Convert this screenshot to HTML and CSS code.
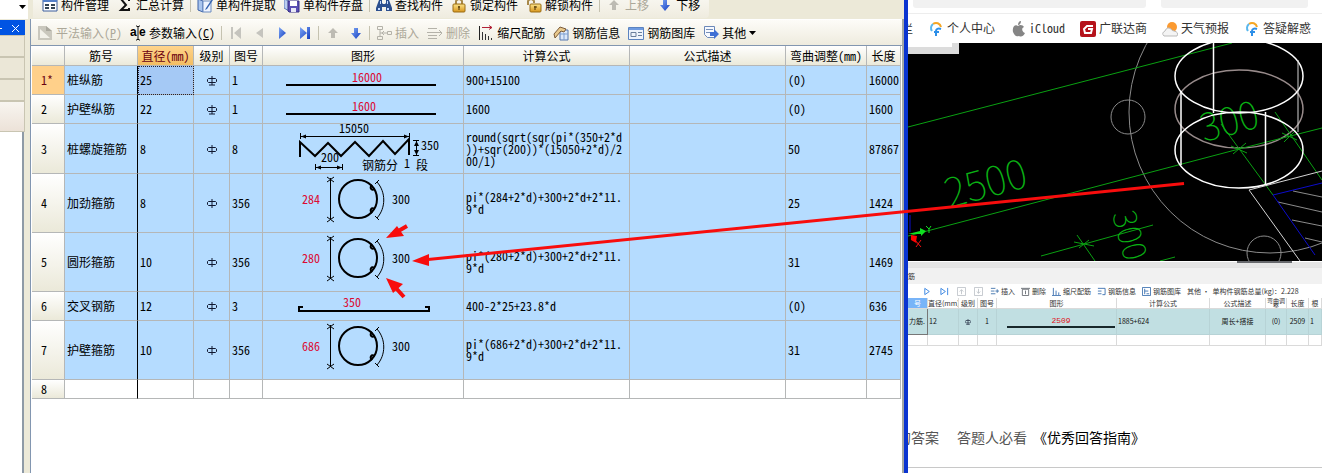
FILE: index.html
```html
<!DOCTYPE html>
<html lang="zh-CN">
<head>
<meta charset="utf-8">
<title>钢筋编辑</title>
<link rel="stylesheet" href="styles.css">
</head>
<body>
<svg class="defs" aria-hidden="true">
  <defs>
    <linearGradient id="blue" x1="0" y1="0" x2="1" y2="1"><stop offset="0" stop-color="#7fa8f5"/><stop offset="1" stop-color="#123cc0"/></linearGradient>
    <linearGradient id="gold" x1="0" y1="0" x2="0" y2="1"><stop offset="0" stop-color="#fbe48a"/><stop offset="1" stop-color="#d8951c"/></linearGradient>
  </defs>
  <symbol id="i-up" viewBox="0 0 16 16"><path d="M8 3l5 5h-3v5H6V8H3z" fill="#bdbbb3"/></symbol>
  <symbol id="i-down" viewBox="0 0 16 16"><path d="M6 3h4v5h3l-5 6-5-6h3z" fill="url(#blue)"/></symbol>
  <symbol id="i-ring" viewBox="0 0 200 58">
    <g fill="none" stroke="#000">
      <circle cx="95" cy="25" r="19" stroke-width="2"/>
      <path d="M67.500 4v42M64 3l7 5M71 3l-7 5M64 43l7 5M71 43l-7 5"/>
      <path d="M109 11c-3 3 0 6 2 4M109 39c-3-3 0-6 2-4" stroke-width="2"/>
      <path d="M114 8c9 10 9 26 0 36M112 10l4-4M112 42l4 4"/>
    </g>
  </symbol>
  <symbol id="i-phi" viewBox="0 0 10 10"><path d="M5 0v9M1.500 2.500h7l1 1v2l-1 1h-7l-1-1v-2z" fill="none" stroke="#101830"/></symbol>
  <symbol id="i-phi2" viewBox="0 0 10 10"><path d="M5 0v9M1.500 2.500h7l1 1v2l-1 1h-7l-1-1v-2zM2 9h6" fill="none" stroke="#101830"/></symbol>
  <symbol id="i-swirl" viewBox="0 0 16 18">
    <path d="M13 7A5 5 0 0 0 5 4" fill="none" stroke="#f6a623" stroke-width="2"/>
    <path d="M5 4a5 5 0 0 0-1 7" fill="none" stroke="#58b7ee" stroke-width="2"/>
    <path d="M13 9c-3-1-5 0-5 2v5M6 12h5" fill="none" stroke="#2d8fe8" stroke-width="2"/>
  </symbol>
</svg>

<div class="desktop">
  <section class="app">
    <div class="bar bar-top">
      <div class="combo"><svg width="7" height="4"><path d="M0 0h7L3.500 4z"/></svg></div>
      <div class="tools tools-top">
        <button><svg viewBox="0 0 16 16"><path d="M1 2h14v12H1z" fill="#fff" stroke="#3a5c9c"/><path d="M1 2h14v3H1z" fill="#5580c8"/><path d="M3 8h4M3 11h4M9 8h4M9 11h4" stroke="#345" stroke-width="2"/></svg>构件管理</button>
        <button><svg viewBox="0 0 16 16"><path d="M12 4V2H4l5 6-5 5h8v-2" fill="none" stroke="#111" stroke-width="2"/></svg>汇总计算</button>
        <i class="sep"></i>
        <button><svg viewBox="0 0 16 16"><path d="M1 2l5 2v11l-5-2z" fill="#a9c5ee" stroke="#3c62a8"/><path d="M6 4h8v11H6z" fill="#eef4ff" stroke="#6b8bc0"/><path d="M15 2l-6 9-1 2 2-1 6-9z" fill="#3563b0"/></svg>单构件提取</button>
        <button><svg viewBox="0 0 16 16"><path d="M0 2l5 2v10l-5-3z" fill="#b9cdf0" stroke="#5c78b5"/><path d="M4 4h11v11H5l-1-1z" fill="#5a4fb4" stroke="#372f86"/><path d="M6 4h7v5H6z" fill="#fff"/><path d="M7 11h5v4H7z" fill="#e8e8f6"/></svg>单构件存盘</button>
        <i class="sep"></i>
        <button><svg viewBox="0 0 16 16"><path d="M3 3h3v3l1 1h2l1-1V3h3l3 8v3h-6v-4H6v4H0v-3z" fill="#2c4f8e"/><path d="M2 11h2v2H2zM11 11h2v2h-2zM4 4h1v3H4zM11 4h1v3h-1z" fill="#c5daff"/></svg>查找构件</button>
        <button><svg viewBox="0 0 16 16"><path d="M5 8V4q3-4 6 0v4" fill="none" stroke="#a8894a" stroke-width="2"/><rect x="2" y="7" width="12" height="8" rx="1" fill="url(#gold)" stroke="#9a6c14"/><path d="M8 9v4M7 10h2" stroke="#4a3000"/></svg>锁定构件</button>
        <button><svg viewBox="0 0 16 16"><path d="M2 8V4q3-4 6 0v2" fill="none" stroke="#a8894a" stroke-width="2"/><rect x="4" y="7" width="11" height="8" rx="1" fill="url(#gold)" stroke="#9a6c14"/><path d="M9 9v4M8 10h3" stroke="#4a3000"/></svg>解锁构件</button>
        <i class="sep"></i>
        <button disabled><svg><use href="#i-up"/></svg>上移</button>
        <button><svg><use href="#i-down"/></svg>下移</button>
      </div>
    </div>

    <div class="work">
      <aside class="side">
        <div class="side-title"><svg width="25" height="15"><path d="M0 8h2v1H0z" fill="#fff"/><path d="M12 5l7 7M19 5l-7 7" stroke="#fff"/></svg></div>
        <div class="side-band"></div><div class="side-band"></div><div class="side-band"></div><div class="side-band last"></div>
        <div class="side-body"></div>
      </aside>
      <main class="panel">
        <div class="tools tools-edit">
          <button disabled><svg viewBox="0 0 16 16"><path d="M1 1h8l6 5v9H1z" fill="#c9c7bd"/><path d="M3 4l10 9H3z" fill="#f2f1ea"/><path d="M9 1v5h6" fill="#aaa89e"/></svg><span>平法输入(<u>P</u>)</span></button>
          <button><svg viewBox="0 0 16 16"><text x="0" y="11" class="ae">a</text><text x="9" y="11" class="ae">e</text><path d="M6 1h1l1 1 1-1h1M8 2v12M6 15h1l1-1 1 1h1" stroke="#111" fill="none"/></svg><span>参数输入(<u>C</u>)</span></button>
          <i class="sep"></i>
          <button class="nav" disabled aria-label="首行"><svg viewBox="0 0 16 16"><path d="M3 2h2v12H3zM13 2v12L6 8z" fill="#c5c4be"/></svg></button>
          <button class="nav" disabled aria-label="上一行"><svg viewBox="0 0 16 16"><path d="M12 3v10L5 8z" fill="#c5c4be"/></svg></button>
          <button class="nav" aria-label="下一行"><svg viewBox="0 0 16 16"><path d="M5 2l7 6-7 6z" fill="url(#blue)"/></svg></button>
          <button class="nav" aria-label="末行"><svg viewBox="0 0 16 16"><path d="M3 2l7 6-7 6zM10 2h3v12h-3z" fill="url(#blue)"/></svg></button>
          <i class="sep"></i>
          <button class="nav" disabled aria-label="上移"><svg><use href="#i-up"/></svg></button>
          <button class="nav" aria-label="下移"><svg><use href="#i-down"/></svg></button>
          <i class="sep"></i>
          <button disabled><svg viewBox="0 0 16 16" fill="none" stroke="#b4b2a9"><path d="M1.500 1.500h5v3h-5zM1.500 11.500h5v3h-5zM11.500 6.500h4v3h-4zM4 5v6M4 8h7M8 6L6 8l2 2"/></svg>插入</button>
          <button disabled><svg viewBox="0 0 16 16" fill="none" stroke="#b4b2a9"><path d="M1 3.500h9M0 7.500h15M1 10.500h9M1 13.500h9M12 5l3 3-3 3"/></svg>删除</button>
          <button><svg viewBox="0 0 16 16" fill="none"><path d="M1.500 1v14" stroke="#222"/><path d="M4 2.500h10M11 .5l3 2-3 2" stroke="#b22036"/><path d="M4.500 7v8M7.500 9v6M10.500 11v4M13.500 13v2" stroke="#333"/></svg>缩尺配筋</button>
          <button><svg viewBox="0 0 16 16"><path d="M7 5h8v10H7z" fill="#dbe7fa" stroke="#5577b0"/><path d="M7 9h8M11 8v7" stroke="#7f9fd0"/><path d="M1 9l6-7 6 2-2 3-3-1-6 7z" fill="#e9c98c" stroke="#7a5a38"/></svg>钢筋信息</button>
          <button><svg viewBox="0 0 16 16"><path d="M.5 2.500h15v12H.5z" fill="#eef4fc" stroke="#5b83c0"/><path d="M1 3h14v2H1z" fill="#6f9be0"/><path d="M3 7.500h5v4H3zM10 7.500h4M10 10.500h4" fill="none" stroke="#6a7f9c"/></svg>钢筋图库</button>
          <button><svg viewBox="0 0 16 16"><path d="M1.500 1.500h10v11h-7l-3-3z" fill="#f6f9ff" stroke="#6b88b8"/><path d="M3 4.500h7M3 7.500h4" stroke="#7790b8"/><path d="M7 7h4V4l5 5-5 5v-3H7z" fill="#3f6fd4"/></svg>其他<svg class="caret" viewBox="0 0 7 4"><path d="M0 0h7L3.500 4z"/></svg></button>
        </div>

        <div class="sheet">
        <table class="rebar">
          <colgroup><col class="c-no"><col class="c-name"><col class="c-dia"><col class="c-grade"><col class="c-fig"><col class="c-shape"><col class="c-formula"><col class="c-desc"><col class="c-bend"><col></colgroup>
          <thead><tr><th></th><th>筋号</th><th class="active">直径(mm)</th><th>级别</th><th>图号</th><th>图形</th><th>计算公式</th><th>公式描述</th><th>弯曲调整(mm)</th><th>长度</th></tr></thead>
          <tbody>
            <tr class="h-s"><th class="current">1*</th><td>桩纵筋</td><td class="focus">25</td><td class="mid"><svg class="phi"><use href="#i-phi2"/></svg></td><td>1</td>
              <td class="shape"><svg viewBox="263 66 200 28"><path d="M286 85h150" stroke="#000" stroke-width="2"/><text x="352" y="82" class="red">16000</text></svg></td>
              <td>900+15100</td><td></td><td>(0)</td><td>16000</td></tr>
            <tr class="h-s"><th>2</th><td>护壁纵筋</td><td>22</td><td class="mid"><svg class="phi"><use href="#i-phi2"/></svg></td><td>1</td>
              <td class="shape"><svg viewBox="263 95 200 28"><path d="M286 114h150" stroke="#000" stroke-width="2"/><text x="352" y="111" class="red">1600</text></svg></td>
              <td>1600</td><td></td><td>(0)</td><td>1600</td></tr>
            <tr class="h-m"><th>3</th><td>桩螺旋箍筋</td><td>8</td><td class="mid"><svg class="phi"><use href="#i-phi"/></svg></td><td>8</td>
              <td class="shape"><svg viewBox="263 124 200 49"><g fill="none" stroke="#000"><path d="M300 157v-15l15 14 13-13 13 13 14-14 14 14 14-15 12 13 14-15v16" stroke-width="2"/><path d="M300.500 133v6M409.500 133v6M301 136.500h108M315.500 164v6M342.500 164v6M316 167.500h26M413 140.500h6M413 155.500h6M416.500 141v14"/></g><path d="M301 136.500l5-2v4zM409 136.500l-5-2v4zM316 167.500l5-2v4zM342 167.500l-5-2v4zM416.500 141l-2.500 5h5zM416.500 155l-2.500-5h5z"/><text x="339" y="133">15050</text><text x="321" y="162">200</text><text x="421" y="150">350</text><text x="362" y="170">钢筋分</text><text x="404" y="168">1</text><text x="416" y="170">段</text></svg></td>
              <td>round(sqrt(sqr(pi*(350+2*d<br>))+sqr(200))*(15050+2*d)/2<br>00/1)</td><td></td><td>50</td><td>87867</td></tr>
            <tr class="h-l"><th>4</th><td>加劲箍筋</td><td>8</td><td class="mid"><svg class="phi"><use href="#i-phi"/></svg></td><td>356</td>
              <td class="shape"><svg viewBox="0 0 200 58"><use href="#i-ring"/><text x="39" y="30" class="red">284</text><text x="129" y="30">300</text></svg></td>
              <td>pi*(284+2*d)+300+2*d+2*11.<br>9*d</td><td></td><td>25</td><td>1424</td></tr>
            <tr class="h-l"><th>5</th><td>圆形箍筋</td><td>10</td><td class="mid"><svg class="phi"><use href="#i-phi"/></svg></td><td>356</td>
              <td class="shape"><svg viewBox="0 0 200 58"><use href="#i-ring"/><text x="39" y="30" class="red">280</text><text x="129" y="30">300</text></svg></td>
              <td>pi*(280+2*d)+300+2*d+2*11.<br>9*d</td><td></td><td>31</td><td>1469</td></tr>
            <tr class="h-s"><th>6</th><td>交叉钢筋</td><td>12</td><td class="mid"><svg class="phi"><use href="#i-phi"/></svg></td><td>3</td>
              <td class="shape"><svg viewBox="263 292 200 28"><path d="M303 307h-4v4h130v-4h-4" fill="none" stroke="#000" stroke-width="2"/><text x="343" y="307" class="red">350</text></svg></td>
              <td>400-2*25+23.8*d</td><td></td><td>(0)</td><td>636</td></tr>
            <tr class="h-l"><th>7</th><td>护壁箍筋</td><td>10</td><td class="mid"><svg class="phi"><use href="#i-phi"/></svg></td><td>356</td>
              <td class="shape"><svg viewBox="0 0 200 58"><use href="#i-ring"/><text x="39" y="30" class="red">686</text><text x="129" y="30">300</text></svg></td>
              <td>pi*(686+2*d)+300+2*d+2*11.<br>9*d</td><td></td><td>31</td><td>2745</td></tr>
            <tr class="h-e"><th>8</th><td></td><td></td><td></td><td></td><td></td><td></td><td></td><td></td><td></td></tr>
          </tbody>
        </table>
        </div>
      </main>
    </div>
  </section>

  <section class="browser">
    <div class="address"><span class="field wide"></span><span class="field"></span></div>
    <nav class="marks">
      <a href="#" class="cut">栏</a>
      <a href="#"><svg viewBox="0 0 16 18"><use href="#i-swirl"/></svg><span>个人中心</span></a>
      <a href="#"><svg viewBox="0 0 16 18"><path d="M8 6c2-2 5-1 6 1-3 1-2 5 1 6-2 4-4 4-6 3-3 1-4 0-6-4-1-5 2-8 5-6zM8 5c0-2 1-4 3-4 0 2-1 4-3 4z" fill="#858585"/></svg><span>iCloud</span></a>
      <a href="#"><svg viewBox="0 0 16 18"><rect y="1" width="16" height="16" rx="2" fill="#b5121b"/><path d="M13 6H7L4 9l1 4h6l1-4H8" fill="none" stroke="#fff" stroke-width="2"/></svg><span>广联达商</span></a>
      <a href="#"><svg viewBox="0 0 16 18"><circle cx="10" cy="7" r="5" fill="#fb9a31"/><path d="M2 16q-3-3 1-5 2-5 6-2 1 2 3 2 5 1 3 5z" fill="#f4f4f4" stroke="#bbb"/></svg><span>天气预报</span></a>
      <a href="#"><svg viewBox="0 0 16 18"><use href="#i-swirl"/></svg><span>答疑解惑</span></a>
    </nav>
    <svg class="cad" viewBox="908 43 414 218" preserveAspectRatio="xMinYMin slice">
      <path d="M908 43h414v218H908z"/>
      <path d="M908 43h51v11h-51z" fill="#dcdcdc"/><path d="M908 43h44v4h-44z" fill="#fff"/>
      <g fill="none" stroke="#8b8b8b"><circle cx="1270" cy="112" r="141"/><circle cx="1128" cy="117" r="17"/><circle cx="1264" cy="253" r="17"/><path d="M1293 191l29 6M1278 202l44 10M1292 220l30 6M1305 238l17 4"/></g>
      <ellipse cx="1239" cy="109" rx="64" ry="39" fill="none" stroke="#988b8b" stroke-width="1.500"/>
      <g fill="none" stroke="#0aa012"><path d="M908 127L1232 43M908 236l331-87 83-21M1221 124l52 71M1275 112l47 68M1041 256l112-31M1077 235l18 26M1074 242l20 4M1079 248l10-8M1231 146l16 7M1233 154l13-11M1282 133l15 7M1284 142l12-12M1160 261l15-4"/></g>
      <g class="cad-text"><text transform="translate(949 208) rotate(-15)" font-size="40">2500</text><text transform="translate(1204 142) rotate(-15)" font-size="38">300</text><text transform="translate(1112 214) rotate(75)" font-size="32">300</text></g>
      <g fill="none" stroke="#fff" stroke-width="1.500"><ellipse cx="1239" cy="76" rx="64" ry="37"/><ellipse cx="1239" cy="150" rx="64" ry="38"/><path d="M1213.500 43v70M1181 91v74M1265.500 112v73"/></g>
      <path d="M1298 60v72M1322 171l-73 19 51 71" fill="none" stroke="#d4d4d4"/>
      <path d="M1322 183l-49 12 42 60M910 215v17" fill="none" stroke="#0c0ccc"/>
      <path d="M908 234l12-3v-3l6 3-5 5v-2z" fill="#0fe020"/><path d="M926 226l3 3 2-3M929 229v4" stroke="#0fe020" fill="none"/>
      <path d="M911 235l6 1-1 6 2 2-7-4z" fill="#f00"/><path d="M915 240l6 7M921 240l-5 7" stroke="#e11"/>
    </svg>
    <div class="dock">
      <div class="thumb"></div>
      <div class="dock-head">筋</div>
      <div class="mini-tools">
        <button aria-label="下一行"><svg viewBox="0 0 10 10"><path d="M2 1.500L7 5 2 8.500z" fill="#fff" stroke="#2f7fe0"/></svg></button>
        <button aria-label="末行"><svg viewBox="0 0 10 10"><path d="M1 1.500L6 5 1 8.500zM8.500 1v8" fill="#fff" stroke="#2f7fe0"/></svg></button>
        <button disabled aria-label="上移"><svg viewBox="0 0 10 10" fill="none" stroke="#bfc4c9"><path d="M.5.500h9v9h-9zM5 8V3M3 5l2-2 2 2"/></svg></button>
        <button disabled aria-label="下移"><svg viewBox="0 0 10 10" fill="none" stroke="#bfc4c9"><path d="M.5.500h9v9h-9zM5 2v5M3 5l2 2 2-2"/></svg></button>
        <button><svg viewBox="0 0 10 10" fill="none" stroke="#4274ad"><path d="M1 1.500h5M1 4.500h4M1 7.500h5M6 4.500h4M8 2.500v4"/></svg>插入</button>
        <button><svg viewBox="0 0 10 10" fill="none" stroke="#686c73"><path d="M1.500 2.500h7v7h-7zM0 1.500h10M5 4v4"/></svg>删除</button>
        <button><svg viewBox="0 0 10 10" fill="none" stroke="#3c70b0"><path d="M1.500 1v8M4.500 4v5M7.500 6v3M0 9.500h10"/></svg>缩尺配筋</button>
        <button><svg viewBox="0 0 10 10" fill="none" stroke="#3c70b0"><path d="M1 1.500h8v4M1 4.500h4M1 7.500h4M6 8.500h3v-3"/></svg>钢筋信息</button>
        <button><svg viewBox="0 0 10 10" fill="none" stroke="#3c70b0"><path d="M.5.500h9v9h-9zM3 2v6M3 4.500h4M5 7.500h3"/></svg>钢筋图库</button>
        <button>其他 ·</button>
        <span>单构件钢筋总量(kg)：2.228</span>
      </div>
      <table class="mini">
        <colgroup><col class="m1"><col class="m2"><col class="m3"><col class="m3"><col class="m5"><col class="m6"><col class="m7"><col class="m8"><col class="m9"><col></colgroup>
        <thead><tr><th class="on">号</th><th>直径(mm)</th><th>级别</th><th>图号</th><th>图形</th><th>计算公式</th><th>公式描述</th><th class="two">弯曲调<br>整</th><th>长度</th><th>根</th></tr></thead>
        <tbody>
          <tr class="fill"><th>力筋.</th><td>12</td><td class="mid"><svg class="phi small"><use href="#i-phi2"/></svg></td><td class="mid">1</td><td class="mini-shape"><span>2509</span></td><td>1885+624</td><td class="mid">周长+搭接</td><td class="mid">(0)</td><td class="mid">2509</td><td>1</td></tr>
          <tr class="blank"><th></th><td></td><td></td><td></td><td></td><td></td><td></td><td></td><td></td><td></td></tr>
        </tbody>
      </table>
    </div>
    <p class="guide"><span class="lead">的答案</span><span>答题人必看</span><a href="#">《优秀回答指南》</a></p>
    <div class="editor"></div>
  </section>

  <svg class="notes" viewBox="0 0 1322 473" preserveAspectRatio="xMinYMin meet" aria-hidden="true">
    <path d="M1184 183.500L428 259.500" stroke="#f80d0d" stroke-width="3"/>
    <path d="M407 226l-12 7M404 297l-9-10" stroke="#f80d0d" stroke-width="4"/>
    <path d="M412 261l17-7v12zM386 238l11-12 7 10zM386 278l17 6-10 9z" fill="#f80d0d"/>
  </svg>
</div>
</body>
</html>
```
FILE: styles.css
```css
* { box-sizing: border-box; }
html, body { height: 100%; margin: 0; }
body {
  overflow: hidden;
  background: #fff;
  color: #000;
  font: 12px/12px "Noto Sans Mono CJK SC", "Noto Sans CJK SC", sans-serif;
}
button { display: flex; align-items: center; gap: 3px; padding: 0 4px; border: 0; background: none; color: inherit; font: inherit; white-space: nowrap; }
button svg { flex: none; width: 16px; height: 16px; }
.defs { position: absolute; width: 0; height: 0; }
.desktop { position: relative; display: grid; grid-template-columns: minmax(0, 908fr) minmax(0, 414fr); height: 100%; overflow: hidden; }

/* estimating application */
.app { display: flex; flex-direction: column; min-width: 0; background: #ece9d8; border-right: 4px solid #0a34d0; }
.bar-top { display: flex; height: 19px; overflow: hidden; }
.combo { width: 28px; padding: 4px 2px 0 0; background: #fff; text-align: right; line-height: 0; }
.tools { display: flex; align-items: center; background: linear-gradient(#fbfaf6, #efecdf); }
.tools-top { height: 27px; margin: -9px 0 0 5px; padding: 0 5px; border-radius: 0 0 4px 0; }
.tools-edit { flex: none; height: 27px; padding: 0 2px; border-top: 1px solid #fff; border-bottom: 1px solid #8296b0; background: linear-gradient(#fdfcf8, #eeebde); }
.tools button:disabled { color: #aca899; }
.tools .nav { width: 23px; padding: 0; justify-content: center; }
.tools .caret { width: 7px; height: 4px; }
.ae { font: bold 12px "Liberation Sans", sans-serif; }
.sep { flex: none; width: 1px; height: 14px; margin: 0 2px; background: #c5c2b0; }
.work { display: flex; flex: 1; min-height: 0; }
.side { display: flex; flex-direction: column; flex: none; width: 25px; margin-right: 5px; }
.side-title { height: 15px; margin-top: 1px; background: #0054e3; line-height: 0; }
.side-band { height: 22px; border: 1px solid #c9c5b2; border-left: 0; background: #ebe7d7; }
.side-band.last { height: 31px; background: linear-gradient(#f8f5f0, #ece2d8); }
.side-body { flex: 1; margin-right: 1px; border-right: 2px solid #8e9aa6; background: #fff; }
.panel { display: flex; flex-direction: column; flex: 1; min-width: 0; border-left: 1px solid #8296b0; border-right: 2px solid #a3a7a5; background: #fff; }
.sheet { padding: 0 1px; }

.rebar { width: 100%; table-layout: fixed; border-collapse: separate; border-spacing: 0; }
.c-no { width: 33px; } .c-name { width: 73px; } .c-dia { width: 56px; } .c-grade { width: 36px; } .c-fig { width: 33px; }
.c-shape { width: 201px; } .c-formula { width: 166px; } .c-desc { width: 156px; } .c-bend { width: 81px; }
.rebar th, .rebar td { padding: 0 0 0 2px; border: 0 solid #b5b7b7; border-width: 0 1px 1px 0; font-weight: 400; text-align: left; white-space: nowrap; }
.rebar th { padding: 0; text-align: center; background: linear-gradient(#fff, #ebe9d9); }
.rebar thead th { height: 20px; }
.rebar tbody th { padding-left: 9px; text-align: left; }
.rebar .active { color: #6b0010; background: linear-gradient(#ffd48c, #f3bd62); }
.rebar tbody .current { color: #6b0010; background: #ffd08a; }
.rebar tbody td { background: #b5dcff; }
.rebar tbody td:nth-child(2) { border-right-color: #000; }
.rebar .h-e td { background: #fff; }
.rebar .mid, .mini .mid { padding: 0; text-align: center; }
.rebar .focus { background: #a5c9f5; outline: 1px dotted #223; outline-offset: -1px; }
.h-s { height: 29px; } .h-m { height: 50px; } .h-l { height: 59px; } .h-e { height: 19px; }
.rebar .shape { padding: 0; line-height: 0; }
.shape svg { display: block; width: 100%; }
.red { fill: #dc0a32; }
.phi { width: 10px; height: 10px; vertical-align: middle; }
.phi.small { width: 6px; height: 6px; }

/* browser window */
.browser { display: flex; flex-direction: column; min-width: 0; background: #fff; }
.address { display: flex; gap: 15px; flex: none; height: 14px; padding: 0 14px 0 5px; border-bottom: 1px solid #ededed; }
.field { flex: 147; height: 8px; border-radius: 0 0 3px 3px; background: #f1f1f1; }
.field.wide { flex: 233; }
.marks { display: flex; align-items: center; gap: 15px; flex: none; height: 29px; overflow: hidden; }
.marks a { display: flex; align-items: center; gap: 3px; flex: none; color: #333; text-decoration: none; }
.marks svg { width: 16px; height: 18px; }
.marks .cut { width: 5px; direction: rtl; overflow: hidden; }
.marks a span { padding-bottom: 1px; }
.cad { display: block; flex: none; width: 100%; height: 218px; }
.cad-text { fill: #0ab014; font-family: "Noto Sans CJK SC", sans-serif; font-weight: 100; }
.dock { position: relative; flex: none; background: #fff; color: #333; font: 7px/9px "Noto Sans CJK SC", sans-serif; }
.thumb { position: absolute; top: 0; right: 30px; width: 55px; height: 2px; background: #66686c; }
.dock-head { height: 23px; padding-top: 10px; border-top: 1px solid #fff; background: linear-gradient(#e5e5e5 5px, #d5d5d5 5px, #f1f1f1 6px); }
.mini-tools { display: flex; align-items: center; height: 14px; padding-left: 11px; white-space: nowrap; overflow: hidden; }
.mini-tools button { gap: 2px; padding: 0 3px; }
.mini-tools button:nth-child(-n+4) { padding: 0 4px; }
.mini-tools svg { width: 9px; height: 9px; }
.mini { width: 100%; table-layout: fixed; border-collapse: separate; border-spacing: 0; }
.m1 { width: 20px; } .m2 { width: 31px; } .m3 { width: 19px; } .m5 { width: 120px; } .m6 { width: 93px; } .m7 { width: 56px; } .m8 { width: 21px; } .m9 { width: 22px; }
.mini th, .mini td { height: 11px; padding: 0 0 0 1px; border: 0 solid #dadada; border-width: 0 1px 1px 0; font-weight: 400; text-align: left; white-space: nowrap; overflow: hidden; }
.mini thead th { padding: 0; text-align: center; }
.mini .on { color: #fff; background: #78b4f8; }
.mini thead .two { font-size: 6px; line-height: 5px; }
.mini .fill th, .mini .fill td { height: 26px; background: #c1dfe2; border-color: #b7d3d6; color: #111; }
.mini .fill th { border-color: #777; }
.mini .mini-shape { padding: 0 1px 0 10px; text-align: center; }
.mini-shape span { display: block; border-bottom: 2px solid #18282b; color: #e01020; font: 8px/10px "Liberation Mono", monospace; }
.guide { display: flex; gap: 18px; flex: 1; align-items: flex-end; margin: 0; padding-bottom: 21px; overflow: hidden; color: #555; font: 14px/18px "Noto Sans CJK SC", sans-serif; white-space: nowrap; }
.guide .lead { width: 31px; direction: rtl; overflow: hidden; }
.guide a { color: #000; text-decoration: none; margin-left: -12px; }
.editor { flex: none; height: 6px; border-top: 1px solid #c8c8c8; }

.notes { position: absolute; inset: 0; width: 100%; height: 100%; pointer-events: none; }
```
